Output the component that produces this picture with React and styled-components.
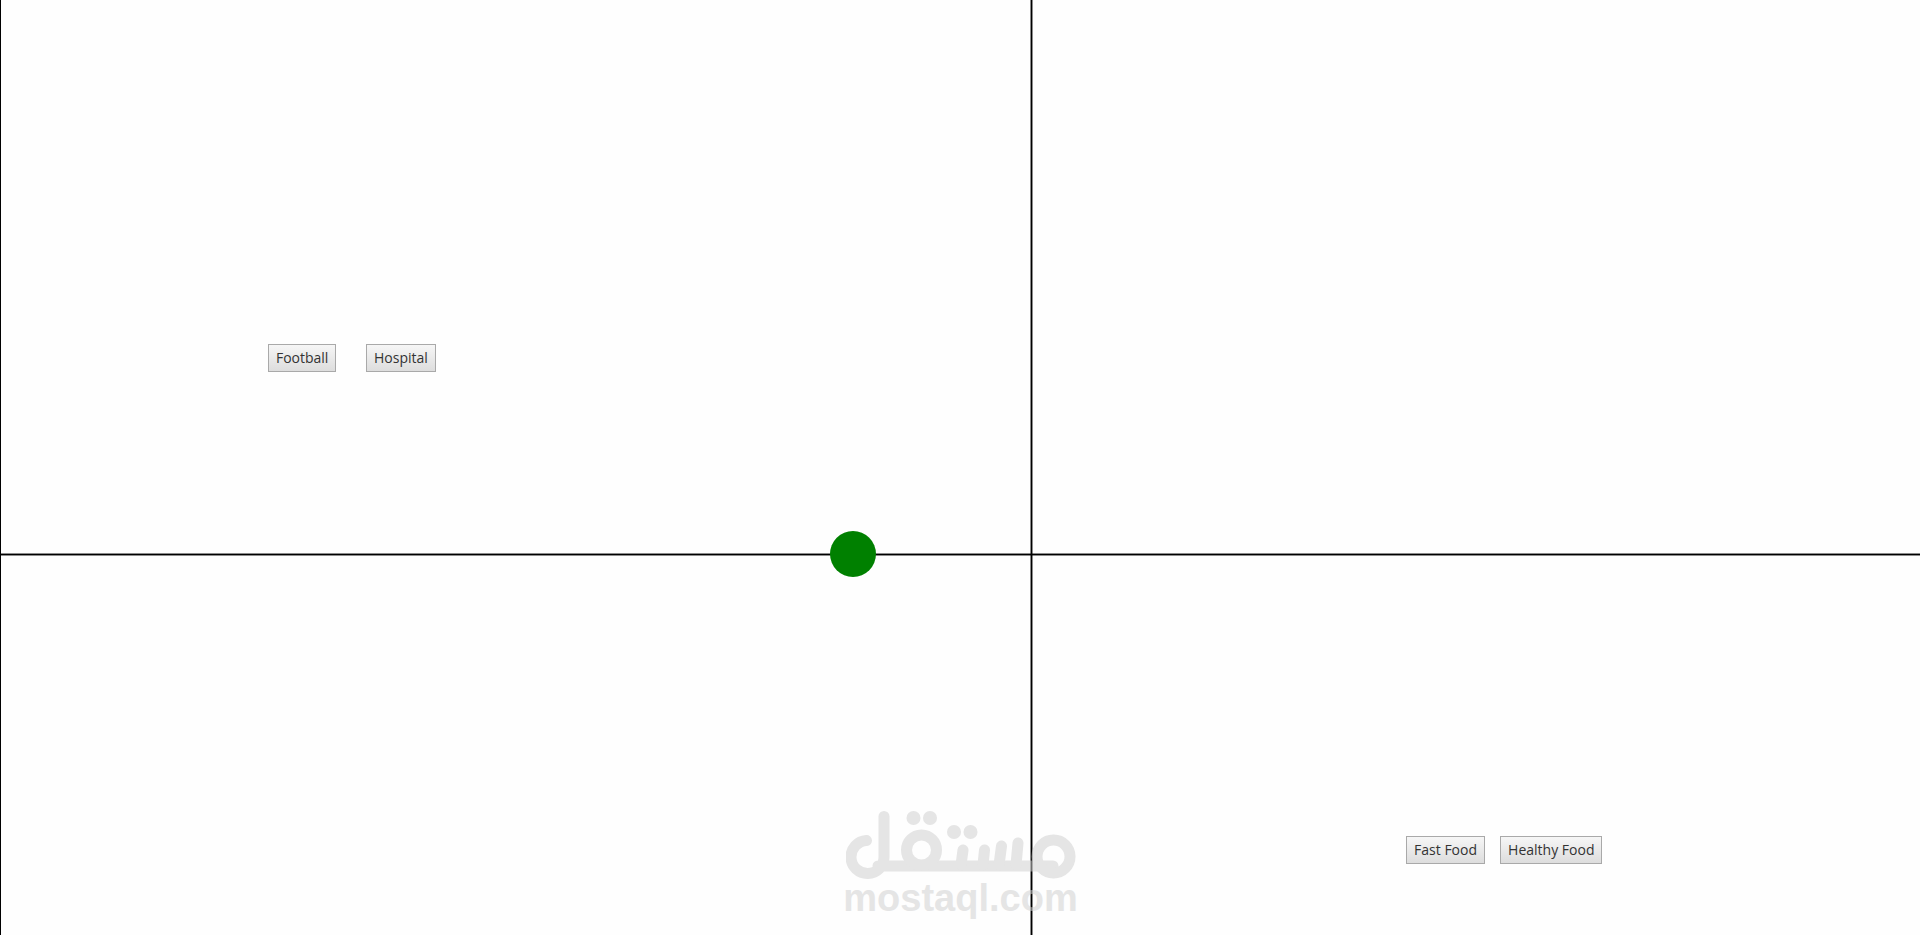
import React from 'react';
import styled, { createGlobalStyle } from 'styled-components';

const GlobalStyle = createGlobalStyle`
    * {
        box-sizing: border-box;
    }

    body {
        margin: 0;
        background: #fefefe;
        font-family: 'Open Sans', 'Noto Sans', sans-serif;
    }
`;

// Styled Components
const Plane = styled.main`
    position: relative;
    display: grid;
    grid-template-columns: 1029fr 3px 887fr;
    grid-template-rows: 553fr 3px 379fr;
    height: 100vh;
    border-left: 1px solid #000;
    overflow: hidden;
`;

const Axis = styled.div`
    background: #000;
    background-clip: padding-box;
    border: 0 solid rgba(0, 0, 0, 0.45);
`;

const VerticalAxis = styled(Axis)`
    grid-column: 2;
    grid-row: 1 / -1;
    border-width: 0 1px;
`;

const HorizontalAxis = styled(Axis)`
    grid-column: 1 / -1;
    grid-row: 2;
    border-width: 1px 0;
`;

const Pin = styled.div`
    position: absolute;
    left: ${({ $x }) => $x}%;
    top: ${({ $y }) => $y}%;
`;

const PlaceButton = styled.button`
    display: block;
    height: 28px;
    padding: 0 7px;
    border: 1px solid #a9a9a9;
    background: linear-gradient(#f6f6f6, #dddddd);
    color: #333;
    font-family: inherit;
    font-size: 14px;
    line-height: 20px;
    white-space: nowrap;
`;

const Marker = styled.div`
    width: 46px;
    height: 46px;
    border-radius: 50%;
    background: #008000;
`;

const Watermark = styled.div`
    position: absolute;
    left: 0;
    right: 0;
    bottom: 18px;
    display: flex;
    flex-direction: column;
    align-items: center;
    color: #cfcfcf;
    opacity: 0.53;
    pointer-events: none;
`;

const WatermarkLogo = styled.svg`
    display: block;
    width: 230px;
    height: 68px;
`;

const WatermarkName = styled.span`
    font-family: 'Liberation Sans', Arial, sans-serif;
    font-size: 38px;
    font-weight: 700;
    line-height: 38px;
`;

const places = [
    { name: 'Football', x: 13.91, y: 36.8 },
    { name: 'Hospital', x: 19.02, y: 36.8 },
    { name: 'Fast Food', x: 73.22, y: 89.42 },
    { name: 'Healthy Food', x: 78.12, y: 89.42 },
];

function Logo() {
    return (
        <WatermarkLogo viewBox="1 0 230 68" aria-hidden="true">
            <g fill="none" stroke="currentColor" strokeWidth="11" strokeLinecap="round">
                <path d="M21.500 29.500A16.500 16.500 0 1 0 39 46V5.500M33 55H208" />
                <circle cx="76.500" cy="39" r="15" />
                <circle cx="208.500" cy="45.500" r="16.500" />
                <path d="M116 54L118 39M138 54L139.500 39M154 54L156.500 35M171 54L173 32" />
            </g>
            <g fill="currentColor">
                <circle cx="68.500" cy="7" r="7" />
                <circle cx="85" cy="7" r="7" />
                <circle cx="109" cy="21" r="7" />
                <circle cx="125.500" cy="21" r="7" />
            </g>
        </WatermarkLogo>
    );
}

export default function App() {
    return (
        <>
            <GlobalStyle />
            <Plane>
                <VerticalAxis />
                <HorizontalAxis />
                {places.map(({ name, x, y }) => (
                    <Pin key={name} $x={x} $y={y}>
                        <PlaceButton type="button">{name}</PlaceButton>
                    </Pin>
                ))}
                <Pin $x={43.2} $y={56.79}>
                    <Marker />
                </Pin>
                <Watermark>
                    <Logo />
                    <WatermarkName>mostaql.com</WatermarkName>
                </Watermark>
            </Plane>
        </>
    );
}
